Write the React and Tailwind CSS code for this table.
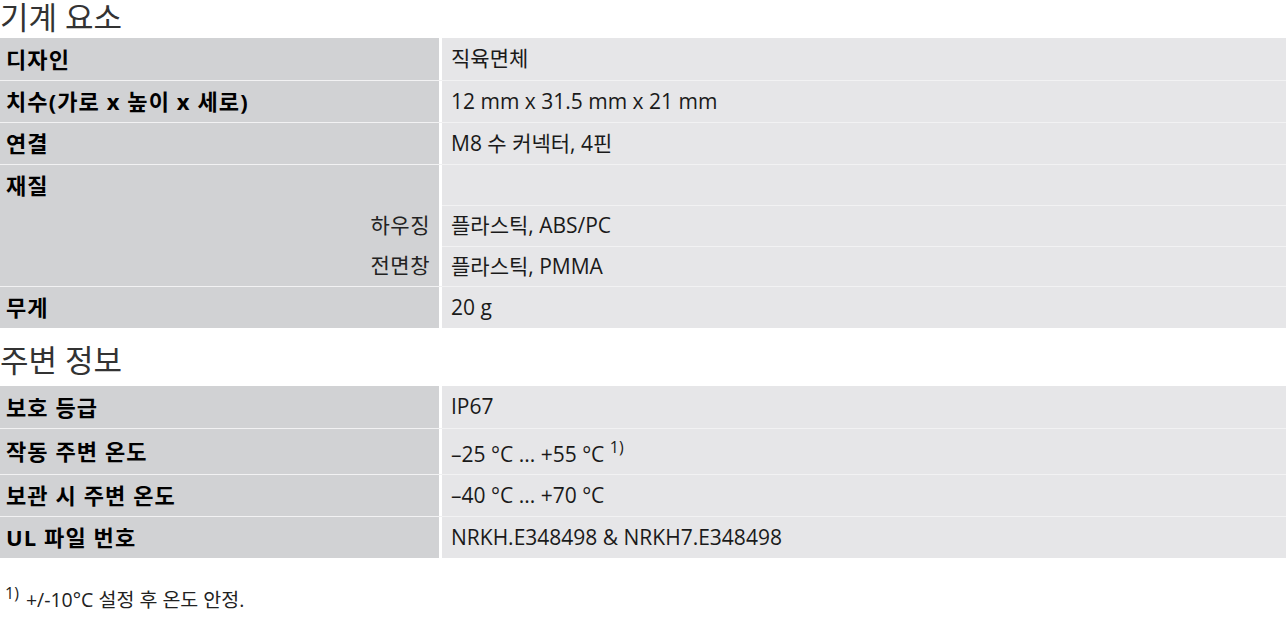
const font = { fontFamily: '"Open Sans", "Noto Sans CJK KR", sans-serif' }

function Row({ label, value, h = 'h-[42px]', first }) {
  return (
    <div className={`flex ${h} ${first ? '' : 'border-t border-[#f2f2f3]'}`}>
      <div className="w-[439px] shrink-0 bg-[#d1d2d4] flex items-center px-[6px] text-[22px] tracking-[1.1px] font-bold text-black">
        {label}
      </div>
      <div className="w-[3px] shrink-0 bg-white" />
      <div className="flex-1 bg-[#e6e6e8] flex items-center pl-[9px] text-[21px] text-[#1a1a1a]">{value}</div>
    </div>
  )
}

function SubRow({ label, value, h }) {
  return (
    <div className={`flex ${h}`}>
      <div className="w-[439px] shrink-0 bg-[#d1d2d4] flex items-center justify-end pr-[9px] text-[21px] tracking-[0.5px] text-[#222]">
        {label}
      </div>
      <div className="w-[3px] shrink-0 bg-white" />
      <div className="flex-1 bg-[#e6e6e8] flex items-center pl-[9px] text-[21px] text-[#1a1a1a] border-t border-[#f2f2f3]">
        {value}
      </div>
    </div>
  )
}

export default function App() {
  return (
    <div className="w-[1286px] h-[627px] bg-white overflow-hidden" style={font}>
      <h2 className="h-[38px] text-[31px] leading-[34px] text-[#333] font-normal">기계 요소</h2>
      <div className="flex flex-col">
        <Row first label="디자인" value="직육면체" />
        <Row label="치수(가로 x 높이 x 세로)" value="12 mm x 31.5 mm x 21 mm" />
        <Row label="연결" value="M8 수 커넥터, 4핀" />
        <Row label="재질" value="" h="h-[41px]" />
        <SubRow label="하우징" value="플라스틱, ABS/PC" h="h-[41px]" />
        <SubRow label="전면창" value="플라스틱, PMMA" h="h-[40px]" />
        <Row label="무게" value="20 g" />
      </div>

      <h2 className="mt-[14px] h-[44px] pt-[1px] text-[31px] leading-[34px] text-[#333] font-normal">주변 정보</h2>
      <div className="flex flex-col">
        <Row first label="보호 등급" value="IP67" />
        <Row
          label="작동 주변 온도"
          h="h-[46px]"
          value={
            <span className="pt-[6px]">
              –25 °C ... +55 °C <sup className="text-[16px] relative -top-[9px]">1)</sup>
            </span>
          }
        />
        <Row label="보관 시 주변 온도" value="–40 °C ... +70 °C" />
        <Row label="UL 파일 번호" value="NRKH.E348498 & NRKH7.E348498" />
      </div>

      <p className="mt-[27px] pl-[5px] text-[19.5px] text-[#222]">
        <sup className="text-[16px] relative -top-[8px] mr-[7px]">1)</sup>+/-10°C 설정 후 온도 안정.
      </p>
    </div>
  )
}
